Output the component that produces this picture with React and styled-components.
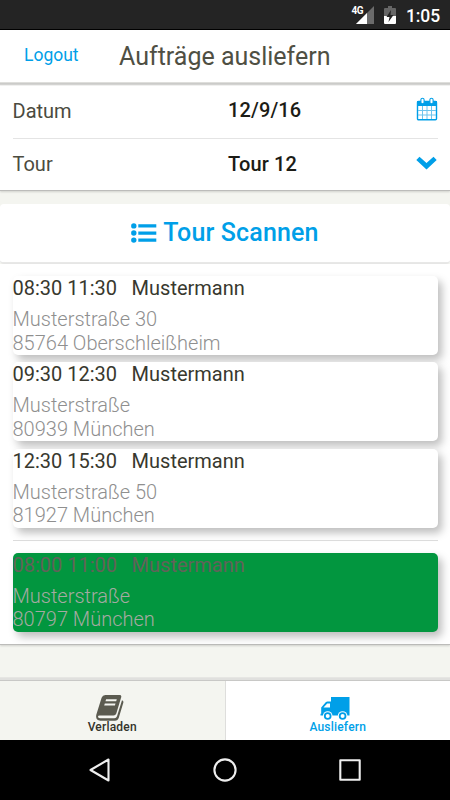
import React, { useState } from 'react';
import styled, { createGlobalStyle } from 'styled-components';

const GlobalStyle = createGlobalStyle`
  * {
    box-sizing: border-box;
  }

  body {
    margin: 0;
    background: #f4f5f0;
    font-family: Roboto, "Liberation Sans", sans-serif;
  }
`;

const Screen = styled.div`
  display: flex;
  flex-direction: column;
  width: 450px;
  height: 800px;
  overflow: hidden;
  background: #f4f5f0;
`;

const StatusBar = styled.div`
  display: flex;
  flex: none;
  justify-content: flex-end;
  height: 30px;
  padding: 6px 10px 0 0;
  background: #242424;
  border-bottom: 1px solid #000;
  color: #fff;
`;

const Network = styled.span`
  font-size: 10px;
  line-height: 10px;
  font-weight: 700;
  letter-spacing: -0.6px;
  margin-right: -7px;
`;

const StatusIcon = styled.svg`
  display: block;
  margin-right: 10px;
`;

const Clock = styled.span`
  font-size: 17.5px;
  line-height: 20px;
  font-weight: 500;
  letter-spacing: -0.1px;
`;

const Header = styled.header`
  display: flex;
  flex: none;
  height: 56px;
  padding-left: 24px;
  background:
    linear-gradient(#dededb 1px, #cbcbc9 1px 2px, #d3d3d1 2px 3px, #f2f2f1 3px) bottom / 100% 4px no-repeat,
    #fff;
`;

const Logout = styled.button`
  width: 95px;
  height: 50px;
  padding: 0;
  border: none;
  background: none;
  color: #009fe8;
  font-family: inherit;
  font-size: 17.5px;
  text-align: left;
  cursor: pointer;
`;

const PageTitle = styled.h1`
  margin: 0;
  color: #4f4f43;
  font-size: 25px;
  line-height: 54px;
  font-weight: 400;
`;

const Form = styled.div`
  flex: none;
  height: 105px;
  padding: 0 12px 0 12.5px;
  background: #fff;
  border-bottom: 1px solid #bcbcba;
  box-shadow: 0 1px 2px rgba(0, 0, 0, 0.15);
`;

const Field = styled.div`
  display: flex;
  align-items: center;
  height: ${(props) => (props.$last ? 51 : 53)}px;
  padding-bottom: ${(props) => props.$lift || 0}px;
  border-bottom: ${(props) => (props.$last ? 'none' : '1px solid #e4e4e4')};
`;

const FieldIcon = styled.svg`
  display: block;
  margin-bottom: ${(props) => props.$lift || 0}px;
`;

const Label = styled.span`
  width: 215.5px;
  color: #4b4b40;
  font-size: 20px;
`;

const Value = styled.span`
  flex: 1;
  padding-bottom: ${(props) => props.$lift || 0}px;
  color: #1c1c16;
  font-size: 20px;
  font-weight: 500;
  letter-spacing: 0.12px;
`;

const ScanButton = styled.button`
  display: flex;
  flex: none;
  align-items: center;
  justify-content: center;
  gap: 6px;
  height: 60px;
  margin-top: 13px;
  padding: 0 0 1px;
  border: none;
  border-bottom: 2px solid #e8e8e7;
  border-radius: 4px;
  background: #fff;
  color: #009fe8;
  font-family: inherit;
  font-size: 25px;
  font-weight: 500;
  letter-spacing: 0.15px;
  cursor: pointer;
`;

const Orders = styled.main`
  flex: none;
  height: 381px;
  padding: 12px 12px 0 12.5px;
  background: #fff;
  border-bottom: 1px solid #bcbcba;
  box-shadow: 0 1px 2px rgba(0, 0, 0, 0.15);
`;

const Card = styled.article`
  height: 79px;
  margin-bottom: 7.3px;
  border-radius: 5px;
  background: ${(props) => (props.$done ? '#02963f' : '#fff')};
  box-shadow: 4px 5px 8px rgba(0, 0, 0, 0.26);
`;

const CardTitle = styled.div`
  display: flex;
  gap: 14.5px;
  height: 32px;
  color: ${(props) => (props.$done ? '#62625a' : '#38382e')};
  font-size: 20px;
  line-height: 25px;
`;

const Address = styled.div`
  color: ${(props) => (props.$done ? '#a5aaa2' : '#8f8f8f')};
  font-size: 20px;
  line-height: 23.7px;
  font-weight: 300;
`;

const Divider = styled.hr`
  height: 1px;
  margin: 12px 0 12px;
  border: none;
  background: #dcdcdc;
`;

const TabBar = styled.nav`
  display: flex;
  flex: none;
  height: 63px;
  margin-top: 32px;
  padding-top: 4px;
  background: linear-gradient(#e6e6e3 1px, #e0e0de 1px 3px, #c8c8c6 3px) top / 100% 4px no-repeat;
`;

const Tab = styled.button`
  display: flex;
  flex: 1;
  flex-direction: column;
  align-items: center;
  padding: 14px 0 0;
  border: none;
  border-right: ${(props) => (props.$first ? '1px solid #dededc' : 'none')};
  background: ${(props) => (props.$active ? '#fff' : '#f4f5f0')};
  color: ${(props) => (props.$active ? '#009fe8' : '#33332b')};
  font-family: inherit;
  font-size: 12px;
  font-weight: 500;
  line-height: 12px;
  letter-spacing: 0.2px;
  cursor: pointer;
`;

const TabIcon = styled.svg`
  display: block;
  margin-right: 5px;
`;

const NavBar = styled.footer`
  display: flex;
  flex: none;
  align-items: center;
  justify-content: center;
  gap: 101px;
  height: 60px;
  background: #000;
`;

const SignalIcon = () => (
  <StatusIcon width="18" height="18" viewBox="0 0 18 18">
    <path d="M18 0V18H0Z" fill="#6b6b6b" />
    <path d="M11 7V18H0Z" fill="#fff" />
  </StatusIcon>
);

const BatteryIcon = () => (
  <StatusIcon width="12" height="18" viewBox="0 0 12 18">
    <path d="M4 0H8V2H11Q12 2 12 3V10H0V3Q0 2 1 2H4Z" fill="#666" />
    <path d="M0 10H12V17Q12 18 11 18H1Q0 18 0 17Z" fill="#fff" />
    <path d="M7 4L2.5 11H5.5L4.5 16L9.5 9H6.5Z" fill="#242424" />
  </StatusIcon>
);

const CalendarIcon = () => (
  <FieldIcon $lift={3} width="22" height="24" viewBox="0 0 22 24" fill="none">
    <rect x="1.5" y="4.5" width="19" height="18.2" rx="1" stroke="#009fe8" strokeWidth="1.4" />
    <path d="M1 4H21V9H1Z" fill="#009fe8" />
    <path d="M6.5 9V22M11 9V22M15.5 9V22M2 13.5H20M2 18H20" stroke="#6fc4ed" strokeWidth="1" />
    <rect x="4.9" y="1.2" width="3.2" height="5.6" rx="1.6" fill="#fff" stroke="#009fe8" strokeWidth="1.1" />
    <rect x="13.9" y="1.2" width="3.2" height="5.6" rx="1.6" fill="#fff" stroke="#009fe8" strokeWidth="1.1" />
  </FieldIcon>
);

const ChevronIcon = () => (
  <FieldIcon $lift={2} width="22" height="14" viewBox="0 0 22 14">
    <path d="M0.3 3.9L3.5 0.7L10.5 7L17.5 0.7L20.7 3.9L10.5 13.6Z" fill="#009fe8" />
  </FieldIcon>
);

const ListIcon = () => (
  <svg width="26" height="20" viewBox="0 0 26 20" fill="#009fe8">
    <circle cx="2.8" cy="2.9" r="2.7" />
    <circle cx="2.8" cy="10" r="2.7" />
    <circle cx="2.8" cy="17.1" r="2.7" />
    <path d="M7.3 1.3H25.3V4.6H7.3ZM7.3 8.4H25.3V11.7H7.3ZM7.3 15.5H25.3V18.8H7.3Z" />
  </svg>
);

const BookIcon = () => (
  <TabIcon width="28" height="26" viewBox="0 0 28 26">
    <path
      d="M9.3 0H23.5Q25.8 0 25.2 2.3L20.3 18.5Q19.6 20.5 17.5 20.5H3.6Q2 20.5 2 21.7Q2.2 23.2 4.5 23.2H18.4Q20.3 23.2 21 21.2L26 5.2Q27.9 6 27.3 7.7L22.8 22.8Q21.8 25.7 19 25.7H4.3Q-0.8 25 0.3 19.7L5.6 2.7Q6.6 0 9.3 0Z"
      fill="#5b5b50"
    />
    <path d="M10.1 4.3H20.8L20.2 6.3H9.5ZM8.8 8.5H19.5L18.9 10.5H8.2Z" fill="#f4f5f0" />
  </TabIcon>
);

const TruckIcon = () => (
  <TabIcon width="30" height="26" viewBox="0 0 30 26">
    <path
      d="M11 2H29.5V20.5H0.5V18.8H1.2V12.5L5.7 7.2Q6.5 6.5 7.5 6.5H11Z"
      fill="#009fe8"
    />
    <path d="M3.5 12.5L7.2 8.6H10V12.5Z" fill="#fff" />
    <circle cx="7.7" cy="21" r="4.8" fill="#fff" />
    <circle cx="22.6" cy="21" r="4.8" fill="#fff" />
    <circle cx="7.7" cy="21" r="2.9" fill="#fff" stroke="#009fe8" strokeWidth="1.8" />
    <circle cx="22.6" cy="21" r="2.9" fill="#fff" stroke="#009fe8" strokeWidth="1.8" />
  </TabIcon>
);

const NavIcon = ({ children }) => (
  <svg width="24" height="24" viewBox="0 0 24 24" fill="none" stroke="#eee" strokeWidth="2.1" strokeLinejoin="round">
    {children}
  </svg>
);

const openOrders = [
  { time: '08:30 11:30', name: 'Mustermann', street: 'Musterstraße 30', city: '85764 Oberschleißheim' },
  { time: '09:30 12:30', name: 'Mustermann', street: 'Musterstraße', city: '80939 München' },
  { time: '12:30 15:30', name: 'Mustermann', street: 'Musterstraße 50', city: '81927 München' }
];

const doneOrders = [
  { time: '08:00 11:00', name: 'Mustermann', street: 'Musterstraße', city: '80797 München' }
];

const Order = ({ order, done }) => (
  <Card $done={done}>
    <CardTitle $done={done}>
      <span>{order.time}</span>
      <span>{order.name}</span>
    </CardTitle>
    <Address $done={done}>
      <div>{order.street}</div>
      <div>{order.city}</div>
    </Address>
  </Card>
);

const App = () => {
  const [tab, setTab] = useState('ausliefern');

  return (
    <Screen>
      <GlobalStyle />
      <StatusBar>
        <Network>4G</Network>
        <SignalIcon />
        <BatteryIcon />
        <Clock>1:05</Clock>
      </StatusBar>
      <Header>
        <Logout type="button">Logout</Logout>
        <PageTitle>Aufträge ausliefern</PageTitle>
      </Header>
      <Form>
        <Field $lift={3}>
          <Label>Datum</Label>
          <Value $lift={2}>12/9/16</Value>
          <CalendarIcon />
        </Field>
        <Field $last $lift={2}>
          <Label>Tour</Label>
          <Value>Tour 12</Value>
          <ChevronIcon />
        </Field>
      </Form>
      <ScanButton type="button">
        <ListIcon />
        Tour Scannen
      </ScanButton>
      <Orders>
        {openOrders.map((order) => (
          <Order key={order.time} order={order} />
        ))}
        <Divider />
        {doneOrders.map((order) => (
          <Order key={order.time} order={order} done />
        ))}
      </Orders>
      <TabBar>
        <Tab type="button" $first $active={tab === 'verladen'} onClick={() => setTab('verladen')}>
          <BookIcon />
          Verladen
        </Tab>
        <Tab type="button" $active={tab === 'ausliefern'} onClick={() => setTab('ausliefern')}>
          <TruckIcon />
          Ausliefern
        </Tab>
      </TabBar>
      <NavBar>
        <NavIcon>
          <path d="M2.5 12L20.5 1.5V22.5Z" />
        </NavIcon>
        <NavIcon>
          <circle cx="12" cy="12" r="10.6" />
        </NavIcon>
        <NavIcon>
          <rect x="2.3" y="2.3" width="19.4" height="19.4" />
        </NavIcon>
      </NavBar>
    </Screen>
  );
};

export default App;
